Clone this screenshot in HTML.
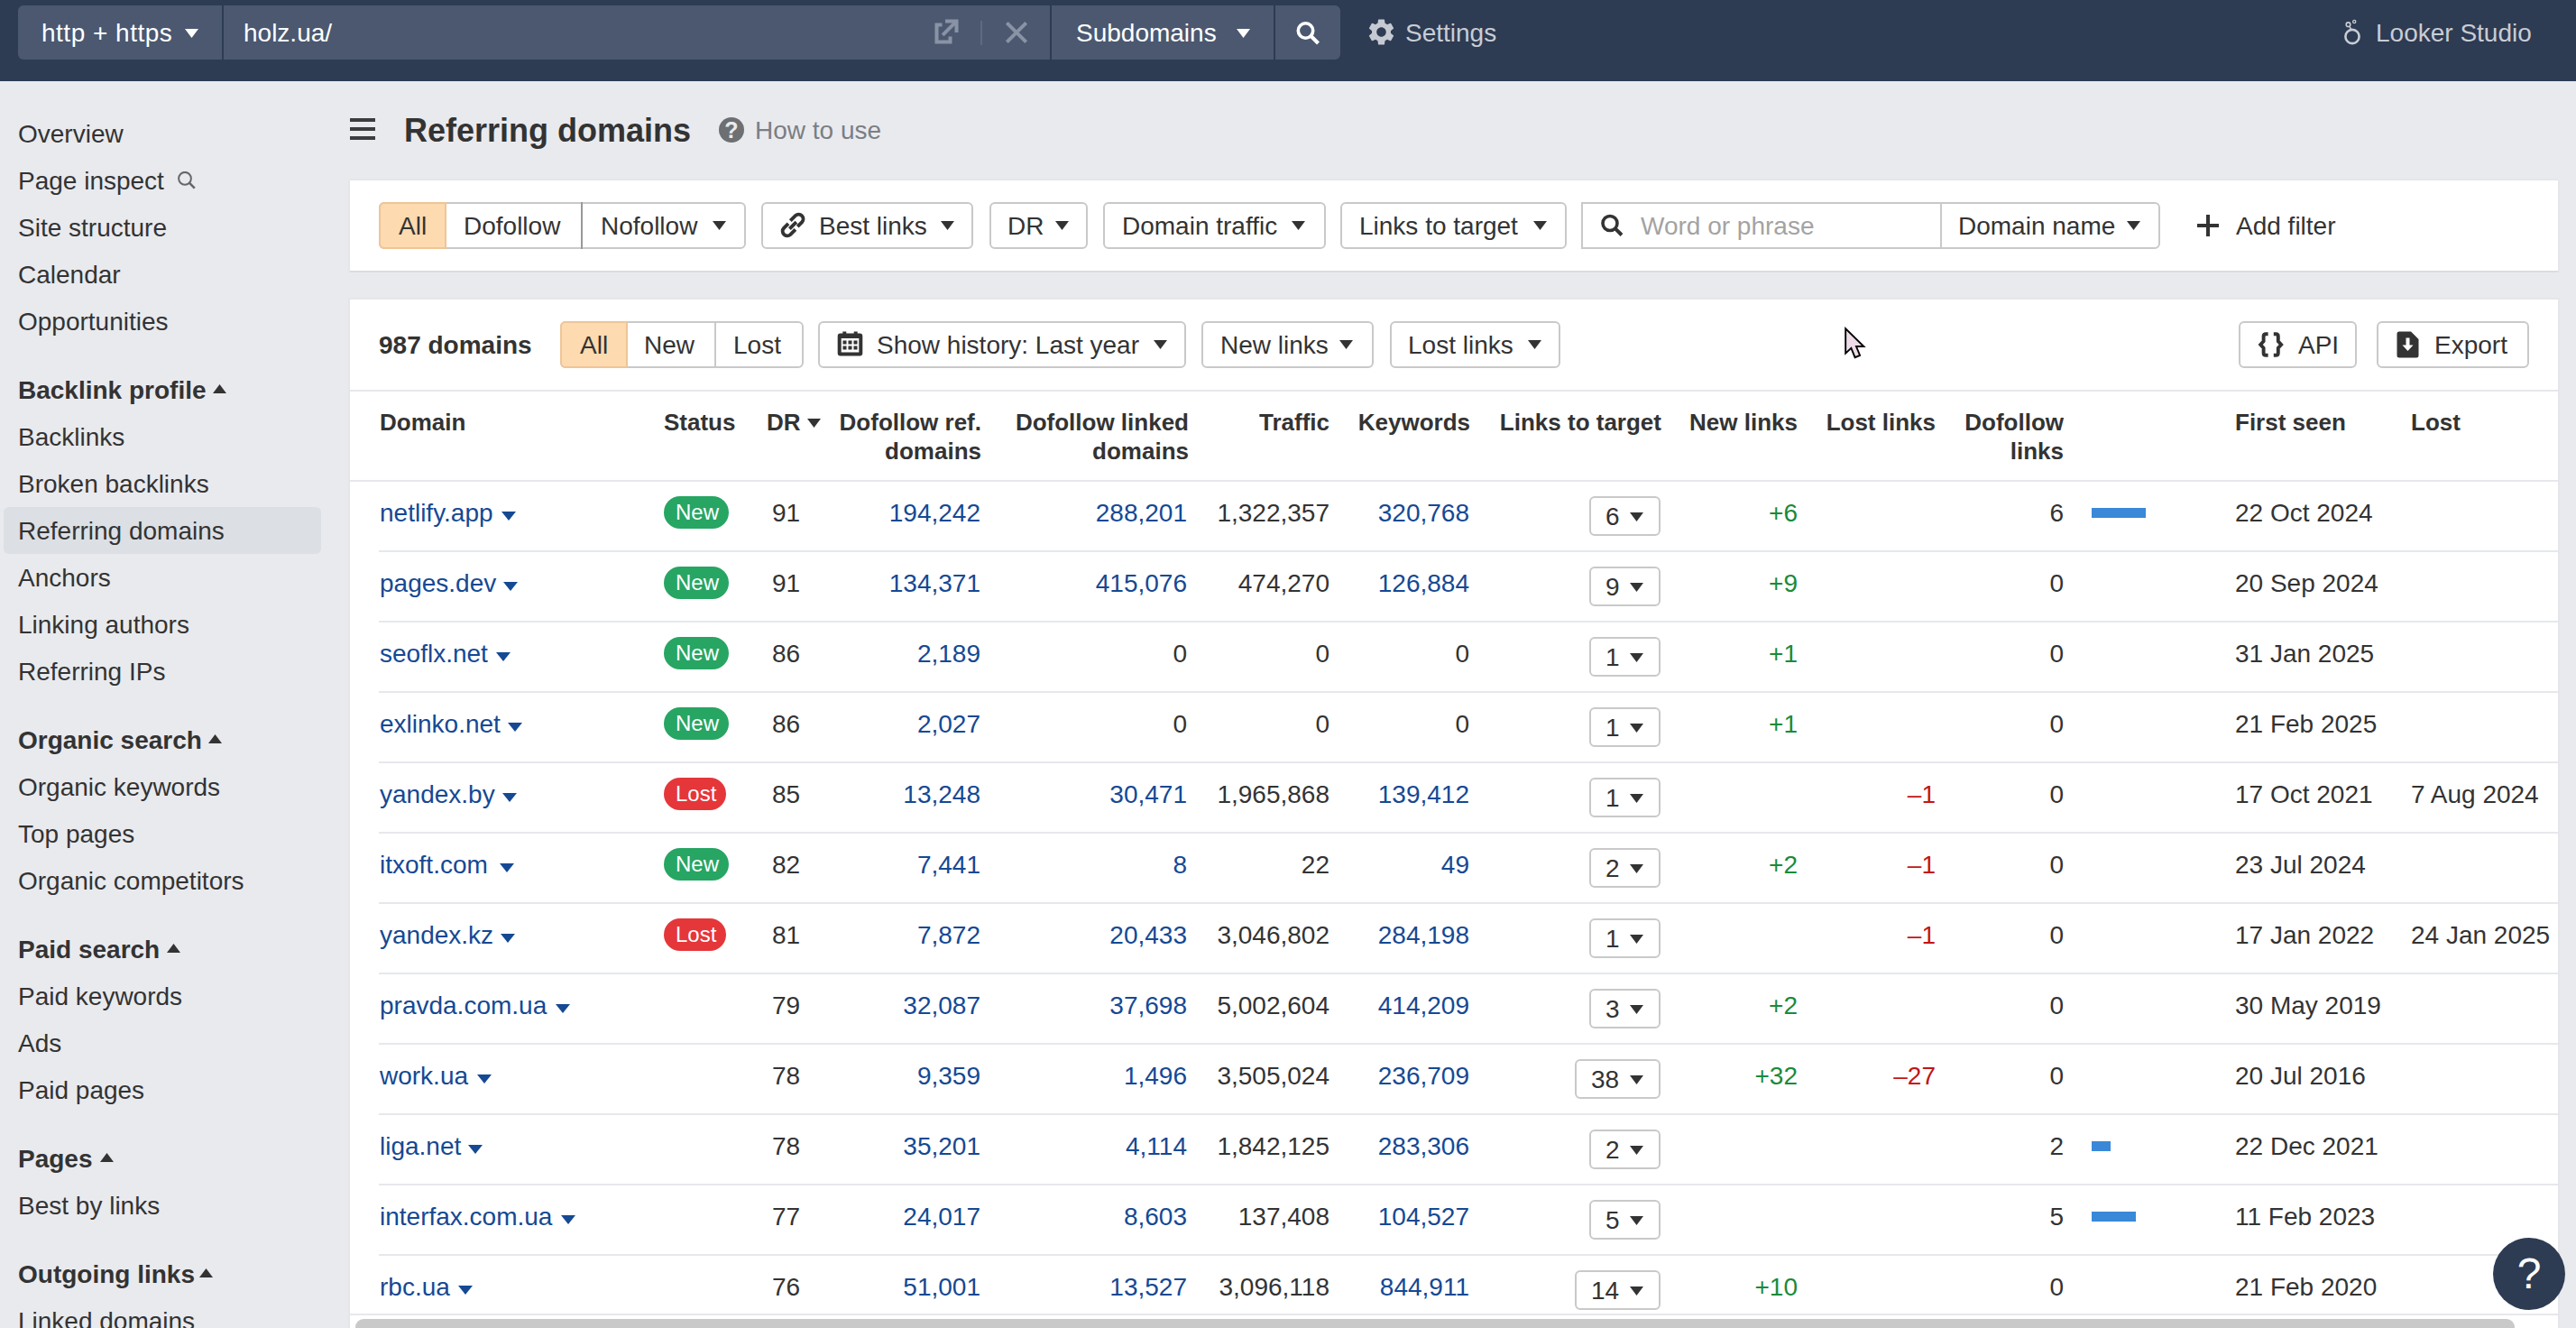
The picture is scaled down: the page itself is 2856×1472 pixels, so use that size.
<!DOCTYPE html>
<html><head><meta charset="utf-8">
<style>
html,body{margin:0;padding:0;}
body{width:2856px;height:1472px;overflow:hidden;position:relative;background:#e9eaee;font-family:"Liberation Sans",sans-serif;color:#333;}
.t{position:absolute;white-space:nowrap;}
.abs{position:absolute;}
.btn{position:absolute;box-sizing:border-box;border:2px solid #c9c9c9;border-radius:6px;background:#fff;height:52px;}
</style></head><body>

<div class="abs" style="left:0;top:0;width:2856px;height:90px;background:#2d3b53"></div>
<div class="abs" style="left:20px;top:6px;width:1466px;height:60px;background:#4b5870;border-radius:6px"></div>
<div class="abs" style="left:246px;top:6px;width:2px;height:60px;background:#2d3b53"></div>
<div class="abs" style="left:1164px;top:6px;width:2px;height:60px;background:#2d3b53"></div>
<div class="abs" style="left:1412px;top:6px;width:2px;height:60px;background:#2d3b53"></div>
<div class="t" style="left:46px;top:23px;font-size:28px;line-height:28px;color:#ffffff;letter-spacing:0.5px;">http + https</div>
<svg style="position:absolute;left:205px;top:32px" width="15" height="10" viewBox="0 0 15 10"><polygon points="0,0 15,0 7.5,10" fill="#ffffff"/></svg>
<div class="t" style="left:270px;top:23px;font-size:28px;line-height:28px;color:#ffffff;">holz.ua/</div>
<svg class="abs" style="left:1036px;top:21px" width="28" height="28" viewBox="0 0 28 28">
<path d="M0.5 4.5 H8.5 V8.5 H4.5 V23.5 H15.5 V19.5 H19.5 V27.5 H0.5 Z" fill="#8993a5"/>
<path d="M12 0.5 H26.5 V15 H22.5 V7.3 L10.5 19.3 L7.7 16.5 L19.7 4.5 H12 Z" fill="#8993a5"/>
</svg>
<div class="abs" style="left:1087px;top:23px;width:2px;height:27px;background:#5f6a7e"></div>
<svg class="abs" style="left:1114px;top:23px" width="26" height="26" viewBox="0 0 26 26">
<path d="M2.3 2.3 L23.7 23.7 M23.7 2.3 L2.3 23.7" stroke="#8993a5" stroke-width="4" stroke-linecap="butt"/></svg>
<div class="t" style="left:1193px;top:23px;font-size:28px;line-height:28px;color:#ffffff;">Subdomains</div>
<svg style="position:absolute;left:1371px;top:32px" width="15" height="10" viewBox="0 0 15 10"><polygon points="0,0 15,0 7.5,10" fill="#ffffff"/></svg>
<svg class="abs" style="left:1436px;top:22px" width="30" height="30" viewBox="0 0 30 30">
<circle cx="11.5" cy="12" r="8.2" fill="none" stroke="#fff" stroke-width="3.6"/>
<path d="M17.5 18 L25.5 26" stroke="#fff" stroke-width="4"/></svg>
<svg class="abs" style="left:1514px;top:18px" width="35" height="35" viewBox="0 0 24 24">
<path fill="#c5cad2" d="M19.14 12.94c.04-.3.06-.61.06-.94 0-.32-.02-.64-.07-.94l2.03-1.58c.18-.14.23-.41.12-.61l-1.92-3.32c-.12-.22-.37-.29-.59-.22l-2.39.96c-.5-.38-1.03-.7-1.62-.94l-.36-2.54c-.04-.24-.24-.41-.48-.41h-3.84c-.24 0-.43.17-.47.41l-.36 2.54c-.59.24-1.13.57-1.62.94l-2.39-.96c-.22-.08-.47 0-.59.22L2.74 8.87c-.12.21-.08.47.12.61l2.03 1.58c-.05.3-.09.63-.09.94s.02.64.07.94l-2.03 1.58c-.18.14-.23.41-.12.61l1.92 3.32c.12.22.37.29.59.22l2.39-.96c.5.38 1.03.7 1.62.94l.36 2.54c.05.24.24.41.48.41h3.84c.24 0 .44-.17.47-.41l.36-2.54c.59-.24 1.13-.56 1.62-.94l2.39.96c.22.08.47 0 .59-.22l1.92-3.32c.12-.22.07-.47-.12-.61l-2.01-1.58zM12 15.6c-1.98 0-3.6-1.62-3.6-3.6s1.62-3.6 3.6-3.6 3.6 1.62 3.6 3.6-1.62 3.6-3.6 3.6z"/></svg>
<div class="t" style="left:1558px;top:23px;font-size:28px;line-height:28px;color:#c8cdd5;">Settings</div>
<svg class="abs" style="left:2596px;top:20px" width="24" height="32" viewBox="0 0 24 32">
<circle cx="12" cy="20.5" r="7.6" fill="none" stroke="#c8cdd5" stroke-width="2.6"/>
<circle cx="7.5" cy="7.2" r="2.3" fill="none" stroke="#c8cdd5" stroke-width="1.6"/>
<circle cx="14.2" cy="4" r="1.6" fill="none" stroke="#c8cdd5" stroke-width="1.3"/>
<path d="M8.8 9.2 L10.5 12.2" stroke="#c8cdd5" stroke-width="1.6"/>
</svg>
<div class="t" style="left:2634px;top:23px;font-size:28px;line-height:28px;color:#c8cdd5;">Looker Studio</div>
<div class="abs" style="left:4px;top:562px;width:352px;height:52px;background:#dcdfe4;border-radius:6px"></div>
<div class="t" style="left:20px;top:135px;font-size:28px;line-height:28px;color:#333333;">Overview</div>
<div class="t" style="left:20px;top:187px;font-size:28px;line-height:28px;color:#333333;">Page inspect</div>
<div class="t" style="left:20px;top:239px;font-size:28px;line-height:28px;color:#333333;">Site structure</div>
<div class="t" style="left:20px;top:291px;font-size:28px;line-height:28px;color:#333333;">Calendar</div>
<div class="t" style="left:20px;top:343px;font-size:28px;line-height:28px;color:#333333;">Opportunities</div>
<div class="t" style="left:20px;top:419px;font-size:28px;line-height:28px;color:#333333;font-weight:bold;">Backlink profile</div>
<svg style="position:absolute;left:236px;top:426px" width="15" height="10" viewBox="0 0 15 10"><polygon points="0,10 15,10 7.5,0" fill="#333333"/></svg>
<div class="t" style="left:20px;top:471px;font-size:28px;line-height:28px;color:#333333;">Backlinks</div>
<div class="t" style="left:20px;top:523px;font-size:28px;line-height:28px;color:#333333;">Broken backlinks</div>
<div class="t" style="left:20px;top:575px;font-size:28px;line-height:28px;color:#333333;">Referring domains</div>
<div class="t" style="left:20px;top:627px;font-size:28px;line-height:28px;color:#333333;">Anchors</div>
<div class="t" style="left:20px;top:679px;font-size:28px;line-height:28px;color:#333333;">Linking authors</div>
<div class="t" style="left:20px;top:731px;font-size:28px;line-height:28px;color:#333333;">Referring IPs</div>
<div class="t" style="left:20px;top:807px;font-size:28px;line-height:28px;color:#333333;font-weight:bold;">Organic search</div>
<svg style="position:absolute;left:231px;top:814px" width="15" height="10" viewBox="0 0 15 10"><polygon points="0,10 15,10 7.5,0" fill="#333333"/></svg>
<div class="t" style="left:20px;top:859px;font-size:28px;line-height:28px;color:#333333;">Organic keywords</div>
<div class="t" style="left:20px;top:911px;font-size:28px;line-height:28px;color:#333333;">Top pages</div>
<div class="t" style="left:20px;top:963px;font-size:28px;line-height:28px;color:#333333;">Organic competitors</div>
<div class="t" style="left:20px;top:1039px;font-size:28px;line-height:28px;color:#333333;font-weight:bold;">Paid search</div>
<svg style="position:absolute;left:185px;top:1046px" width="15" height="10" viewBox="0 0 15 10"><polygon points="0,10 15,10 7.5,0" fill="#333333"/></svg>
<div class="t" style="left:20px;top:1091px;font-size:28px;line-height:28px;color:#333333;">Paid keywords</div>
<div class="t" style="left:20px;top:1143px;font-size:28px;line-height:28px;color:#333333;">Ads</div>
<div class="t" style="left:20px;top:1195px;font-size:28px;line-height:28px;color:#333333;">Paid pages</div>
<div class="t" style="left:20px;top:1271px;font-size:28px;line-height:28px;color:#333333;font-weight:bold;">Pages</div>
<svg style="position:absolute;left:111px;top:1278px" width="15" height="10" viewBox="0 0 15 10"><polygon points="0,10 15,10 7.5,0" fill="#333333"/></svg>
<div class="t" style="left:20px;top:1323px;font-size:28px;line-height:28px;color:#333333;">Best by links</div>
<div class="t" style="left:20px;top:1399px;font-size:28px;line-height:28px;color:#333333;font-weight:bold;">Outgoing links</div>
<svg style="position:absolute;left:221px;top:1406px" width="15" height="10" viewBox="0 0 15 10"><polygon points="0,10 15,10 7.5,0" fill="#333333"/></svg>
<div class="t" style="left:20px;top:1451px;font-size:28px;line-height:28px;color:#333333;">Linked domains</div>
<svg class="abs" style="left:196px;top:190px" width="24" height="24" viewBox="0 0 24 24">
<circle cx="9" cy="7.8" r="6.9" fill="none" stroke="#63676c" stroke-width="2"/>
<path d="M13.9 12.7 L19.8 18.6" stroke="#63676c" stroke-width="2.6"/></svg>
<div class="abs" style="left:388px;top:131px;width:28px;height:4px;background:#3a3c3e"></div>
<div class="abs" style="left:388px;top:141px;width:28px;height:4px;background:#3a3c3e"></div>
<div class="abs" style="left:388px;top:151px;width:28px;height:4px;background:#3a3c3e"></div>
<div class="t" style="left:448px;top:127px;font-size:36px;line-height:36px;color:#333333;font-weight:bold;">Referring domains</div>
<div class="abs" style="left:797px;top:130px;width:28px;height:28px;border-radius:50%;background:#6c7073"></div>
<div class="t" style="left:797px;top:130px;width:28px;height:28px;line-height:28px;text-align:center;font-size:25px;font-weight:bold;color:#e9eaee">?</div>
<div class="t" style="left:837px;top:131px;font-size:28px;line-height:28px;color:#7b7e83;">How to use</div>
<div class="abs" style="left:388px;top:200px;width:2448px;height:100px;background:#fff;border-bottom:2px solid #d9dce0;box-shadow:0 -2px 0 0 #e4e6ea, 2px 0 0 0 #e4e6ea, -2px 0 0 0 #e4e6ea"></div>
<div class="btn" style="left:420px;top:224px;width:407px"></div>
<div class="abs" style="left:420px;top:224px;width:75px;height:52px;box-sizing:border-box;background:#fddab0;border:2px solid #eec597;border-radius:6px 0 0 6px"></div>
<div class="abs" style="left:644px;top:224px;width:2px;height:52px;background:#999"></div>
<div class="t" style="left:442px;top:237px;font-size:28px;line-height:28px;color:#333333;">All</div>
<div class="t" style="left:514px;top:237px;font-size:28px;line-height:28px;color:#333333;">Dofollow</div>
<div class="t" style="left:666px;top:237px;font-size:28px;line-height:28px;color:#333333;">Nofollow</div>
<svg style="position:absolute;left:790px;top:245px" width="15" height="10" viewBox="0 0 15 10"><polygon points="0,0 15,0 7.5,10" fill="#333333"/></svg>
<div class="btn" style="left:844px;top:224px;width:235px"></div>
<svg class="abs" style="left:855px;top:225px" width="50" height="50" viewBox="0 0 50 50">
<g fill="none" stroke="#333" stroke-width="3.9" stroke-linecap="butt">
<path d="M21.3 19.6 L27 13.9 A5.1 5.1 0 0 1 34.2 21.1 L29.2 26.1"/>
<path d="M26.9 29.4 L21.2 35.1 A5.1 5.1 0 0 1 14 27.9 L19 22.9"/>
<path d="M20.4 28.6 L27.9 21.1"/>
</g></svg>
<div class="t" style="left:908px;top:237px;font-size:28px;line-height:28px;color:#333333;">Best links</div>
<svg style="position:absolute;left:1043px;top:245px" width="15" height="10" viewBox="0 0 15 10"><polygon points="0,0 15,0 7.5,10" fill="#333333"/></svg>
<div class="btn" style="left:1097px;top:224px;width:109px"></div>
<div class="t" style="left:1117px;top:237px;font-size:28px;line-height:28px;color:#333333;">DR</div>
<svg style="position:absolute;left:1170px;top:245px" width="15" height="10" viewBox="0 0 15 10"><polygon points="0,0 15,0 7.5,10" fill="#333333"/></svg>
<div class="btn" style="left:1223px;top:224px;width:247px"></div>
<div class="t" style="left:1244px;top:237px;font-size:28px;line-height:28px;color:#333333;">Domain traffic</div>
<svg style="position:absolute;left:1432px;top:245px" width="15" height="10" viewBox="0 0 15 10"><polygon points="0,0 15,0 7.5,10" fill="#333333"/></svg>
<div class="btn" style="left:1486px;top:224px;width:251px"></div>
<div class="t" style="left:1507px;top:237px;font-size:28px;line-height:28px;color:#333333;">Links to target</div>
<svg style="position:absolute;left:1700px;top:245px" width="15" height="10" viewBox="0 0 15 10"><polygon points="0,0 15,0 7.5,10" fill="#333333"/></svg>
<div class="btn" style="left:1753px;top:224px;width:642px;border-radius:0 6px 6px 0"></div>
<div class="abs" style="left:2151px;top:224px;width:2px;height:52px;background:#c9c9c9"></div>
<svg class="abs" style="left:1772px;top:234px" width="30" height="30" viewBox="0 0 30 30">
<circle cx="13" cy="13.5" r="8" fill="none" stroke="#333" stroke-width="3.6"/>
<path d="M18.8 19.3 L26 26.5" stroke="#333" stroke-width="4"/></svg>
<div class="t" style="left:1819px;top:237px;font-size:28px;line-height:28px;color:#a3a3a3;">Word or phrase</div>
<div class="t" style="left:2171px;top:237px;font-size:28px;line-height:28px;color:#333333;">Domain name</div>
<svg style="position:absolute;left:2358px;top:245px" width="15" height="10" viewBox="0 0 15 10"><polygon points="0,0 15,0 7.5,10" fill="#333333"/></svg>
<div class="abs" style="left:2436px;top:248px;width:24px;height:4px;background:#333"></div>
<div class="abs" style="left:2446px;top:238px;width:4px;height:24px;background:#333"></div>
<div class="t" style="left:2479px;top:237px;font-size:28px;line-height:28px;color:#333333;">Add filter</div>
<div class="abs" style="left:388px;top:332px;width:2448px;height:1140px;background:#fff;box-shadow:0 0 0 2px #e4e6ea"></div>
<div class="t" style="left:420px;top:369px;font-size:28px;line-height:28px;color:#333333;font-weight:bold;">987 domains</div>
<div class="btn" style="left:621px;top:356px;width:270px"></div>
<div class="abs" style="left:621px;top:356px;width:75px;height:52px;box-sizing:border-box;background:#fddab0;border:2px solid #eec597;border-radius:6px 0 0 6px"></div>
<div class="abs" style="left:792px;top:356px;width:2px;height:52px;background:#c9c9c9"></div>
<div class="t" style="left:643px;top:369px;font-size:28px;line-height:28px;color:#333333;">All</div>
<div class="t" style="left:714px;top:369px;font-size:28px;line-height:28px;color:#333333;">New</div>
<div class="t" style="left:813px;top:369px;font-size:28px;line-height:28px;color:#333333;">Lost</div>
<div class="btn" style="left:907px;top:356px;width:408px"></div>
<svg class="abs" style="left:928px;top:367px" width="30" height="28" viewBox="0 0 30 28">
<path fill="#333" d="M6.3 0.5 H10.3 V2.5 H18.7 V0.5 H22.7 V2.5 H25.3 A3 3 0 0 1 28.3 5.5 V24.5 A3 3 0 0 1 25.3 27.5 H3.7 A3 3 0 0 1 0.7 24.5 V5.5 A3 3 0 0 1 3.7 2.5 H6.3 Z M4.7 8 V23.5 H24.3 V8 Z"/>
<rect x="6.5" y="10.5" width="4" height="4" fill="#333"/><rect x="12.5" y="10.5" width="4" height="4" fill="#333"/><rect x="18.5" y="10.5" width="4" height="4" fill="#333"/>
<rect x="6.5" y="16.5" width="4" height="4" fill="#333"/><rect x="12.5" y="16.5" width="4" height="4" fill="#333"/><rect x="18.5" y="16.5" width="4" height="4" fill="#333"/>
</svg>
<div class="t" style="left:972px;top:369px;font-size:28px;line-height:28px;color:#333333;">Show history: Last year</div>
<svg style="position:absolute;left:1279px;top:377px" width="15" height="10" viewBox="0 0 15 10"><polygon points="0,0 15,0 7.5,10" fill="#333333"/></svg>
<div class="btn" style="left:1332px;top:356px;width:191px"></div>
<div class="t" style="left:1353px;top:369px;font-size:28px;line-height:28px;color:#333333;">New links</div>
<svg style="position:absolute;left:1485px;top:377px" width="15" height="10" viewBox="0 0 15 10"><polygon points="0,0 15,0 7.5,10" fill="#333333"/></svg>
<div class="btn" style="left:1541px;top:356px;width:189px"></div>
<div class="t" style="left:1561px;top:369px;font-size:28px;line-height:28px;color:#333333;">Lost links</div>
<svg style="position:absolute;left:1694px;top:377px" width="15" height="10" viewBox="0 0 15 10"><polygon points="0,0 15,0 7.5,10" fill="#333333"/></svg>
<div class="btn" style="left:2482px;top:356px;width:131px"></div>
<svg class="abs" style="left:2503px;top:367px" width="30" height="30" viewBox="0 0 30 30">
<path fill="none" stroke="#333" stroke-width="3.9" d="M11.6 3.2 H9.2 Q6.6 3.2 6.6 5.8 V11.2 L3.2 15 L6.6 18.8 V24.2 Q6.6 26.8 9.2 26.8 H11.6 M17.8 3.2 H20.2 Q22.8 3.2 22.8 5.8 V11.2 L26.2 15 L22.8 18.8 V24.2 Q22.8 26.8 20.2 26.8 H17.8"/></svg>
<div class="t" style="left:2548px;top:369px;font-size:28px;line-height:28px;color:#333333;">API</div>
<div class="btn" style="left:2635px;top:356px;width:169px"></div>
<svg class="abs" style="left:2657px;top:367px" width="26" height="30" viewBox="0 0 26 30">
<path fill="#333" d="M3 0.5 H16 L24.5 9 V27 A2.5 2.5 0 0 1 22 29.5 H3 A2.5 2.5 0 0 1 0.5 27 V3 A2.5 2.5 0 0 1 3 0.5 Z"/>
<path fill="#fff" d="M10.5 7.5 H14.5 V15.5 H18.5 L12.5 22 L6.5 15.5 H10.5 Z"/></svg>
<div class="t" style="left:2699px;top:369px;font-size:28px;line-height:28px;color:#333333;">Export</div>
<div class="abs" style="left:388px;top:432px;width:2448px;height:2px;background:#e6e8ec"></div>
<div class="t" style="left:421px;top:455px;font-size:26px;line-height:26px;color:#333333;font-weight:bold;">Domain</div>
<div class="t" style="left:736px;top:455px;font-size:26px;line-height:26px;color:#333333;font-weight:bold;">Status</div>
<div class="t" style="left:850px;top:455px;font-size:26px;line-height:26px;color:#333333;font-weight:bold;">DR</div>
<svg style="position:absolute;left:895px;top:464px" width="15" height="10" viewBox="0 0 15 10"><polygon points="0,0 15,0 7.5,10" fill="#333333"/></svg>
<div class="t" style="right:1768px;top:455px;font-size:26px;line-height:26px;color:#333333;font-weight:bold;">Dofollow ref.</div>
<div class="t" style="right:1768px;top:487px;font-size:26px;line-height:26px;color:#333333;font-weight:bold;">domains</div>
<div class="t" style="right:1538px;top:455px;font-size:26px;line-height:26px;color:#333333;font-weight:bold;">Dofollow linked</div>
<div class="t" style="right:1538px;top:487px;font-size:26px;line-height:26px;color:#333333;font-weight:bold;">domains</div>
<div class="t" style="right:1382px;top:455px;font-size:26px;line-height:26px;color:#333333;font-weight:bold;">Traffic</div>
<div class="t" style="right:1226px;top:455px;font-size:26px;line-height:26px;color:#333333;font-weight:bold;">Keywords</div>
<div class="t" style="right:1014px;top:455px;font-size:26px;line-height:26px;color:#333333;font-weight:bold;">Links to target</div>
<div class="t" style="right:863px;top:455px;font-size:26px;line-height:26px;color:#333333;font-weight:bold;">New links</div>
<div class="t" style="right:710px;top:455px;font-size:26px;line-height:26px;color:#333333;font-weight:bold;">Lost links</div>
<div class="t" style="right:568px;top:455px;font-size:26px;line-height:26px;color:#333333;font-weight:bold;">Dofollow</div>
<div class="t" style="right:568px;top:487px;font-size:26px;line-height:26px;color:#333333;font-weight:bold;">links</div>
<div class="t" style="left:2478px;top:455px;font-size:26px;line-height:26px;color:#333333;font-weight:bold;">First seen</div>
<div class="t" style="left:2673px;top:455px;font-size:26px;line-height:26px;color:#333333;font-weight:bold;">Lost</div>
<div class="abs" style="left:388px;top:532px;width:2448px;height:2px;background:#e6e8ec"></div>
<div class="abs" style="left:388px;top:534px;width:2448px;height:922px;overflow:hidden">
<div class="t" style="left:33px;top:21px;font-size:28px;line-height:28px;color:#154994;">netlify.app</div>
<svg style="position:absolute;left:168px;top:33px" width="16" height="10" viewBox="0 0 16 10"><polygon points="0,0 16,0 8.0,10" fill="#154994"/></svg>
<div class="abs" style="left:348px;top:16px;width:72px;height:36px;border-radius:18px;background:#27a563"></div>
<div class="t" style="left:361px;top:22px;font-size:24px;line-height:24px;color:#fff;">New</div>
<div class="t" style="left:468px;top:21px;font-size:28px;line-height:28px;color:#333333;">91</div>
<div class="t" style="right:1749px;top:21px;font-size:28px;line-height:28px;color:#154994;">194,242</div>
<div class="t" style="right:1520px;top:21px;font-size:28px;line-height:28px;color:#154994;">288,201</div>
<div class="t" style="right:1362px;top:21px;font-size:28px;line-height:28px;color:#333333;">1,322,357</div>
<div class="t" style="right:1207px;top:21px;font-size:28px;line-height:28px;color:#154994;">320,768</div>
<div class="abs" style="left:1374px;top:16px;width:79px;height:44px;box-sizing:border-box;border:2px solid #c9c9c9;border-radius:6px;background:#fff"></div>
<div class="t" style="left:1392px;top:25px;font-size:28px;line-height:28px;color:#333333;">6</div>
<svg style="position:absolute;left:1419px;top:34px" width="15" height="10" viewBox="0 0 15 10"><polygon points="0,0 15,0 7.5,10" fill="#333333"/></svg>
<div class="t" style="right:843px;top:21px;font-size:28px;line-height:28px;color:#1b8a3a;">+6</div>
<div class="t" style="right:548px;top:21px;font-size:28px;line-height:28px;color:#333333;">6</div>
<div class="abs" style="left:1931px;top:29px;width:60px;height:11px;background:#3a88d8"></div>
<div class="t" style="left:2090px;top:21px;font-size:28px;line-height:28px;color:#333333;">22 Oct 2024</div>
<div class="abs" style="left:32px;top:76px;width:2416px;height:2px;background:#e6e8ec"></div>
<div class="t" style="left:33px;top:99px;font-size:28px;line-height:28px;color:#154994;">pages.dev</div>
<svg style="position:absolute;left:170px;top:111px" width="16" height="10" viewBox="0 0 16 10"><polygon points="0,0 16,0 8.0,10" fill="#154994"/></svg>
<div class="abs" style="left:348px;top:94px;width:72px;height:36px;border-radius:18px;background:#27a563"></div>
<div class="t" style="left:361px;top:100px;font-size:24px;line-height:24px;color:#fff;">New</div>
<div class="t" style="left:468px;top:99px;font-size:28px;line-height:28px;color:#333333;">91</div>
<div class="t" style="right:1749px;top:99px;font-size:28px;line-height:28px;color:#154994;">134,371</div>
<div class="t" style="right:1520px;top:99px;font-size:28px;line-height:28px;color:#154994;">415,076</div>
<div class="t" style="right:1362px;top:99px;font-size:28px;line-height:28px;color:#333333;">474,270</div>
<div class="t" style="right:1207px;top:99px;font-size:28px;line-height:28px;color:#154994;">126,884</div>
<div class="abs" style="left:1374px;top:94px;width:79px;height:44px;box-sizing:border-box;border:2px solid #c9c9c9;border-radius:6px;background:#fff"></div>
<div class="t" style="left:1392px;top:103px;font-size:28px;line-height:28px;color:#333333;">9</div>
<svg style="position:absolute;left:1419px;top:112px" width="15" height="10" viewBox="0 0 15 10"><polygon points="0,0 15,0 7.5,10" fill="#333333"/></svg>
<div class="t" style="right:843px;top:99px;font-size:28px;line-height:28px;color:#1b8a3a;">+9</div>
<div class="t" style="right:548px;top:99px;font-size:28px;line-height:28px;color:#333333;">0</div>
<div class="t" style="left:2090px;top:99px;font-size:28px;line-height:28px;color:#333333;">20 Sep 2024</div>
<div class="abs" style="left:32px;top:154px;width:2416px;height:2px;background:#e6e8ec"></div>
<div class="t" style="left:33px;top:177px;font-size:28px;line-height:28px;color:#154994;">seoflx.net</div>
<svg style="position:absolute;left:162px;top:189px" width="16" height="10" viewBox="0 0 16 10"><polygon points="0,0 16,0 8.0,10" fill="#154994"/></svg>
<div class="abs" style="left:348px;top:172px;width:72px;height:36px;border-radius:18px;background:#27a563"></div>
<div class="t" style="left:361px;top:178px;font-size:24px;line-height:24px;color:#fff;">New</div>
<div class="t" style="left:468px;top:177px;font-size:28px;line-height:28px;color:#333333;">86</div>
<div class="t" style="right:1749px;top:177px;font-size:28px;line-height:28px;color:#154994;">2,189</div>
<div class="t" style="right:1520px;top:177px;font-size:28px;line-height:28px;color:#333333;">0</div>
<div class="t" style="right:1362px;top:177px;font-size:28px;line-height:28px;color:#333333;">0</div>
<div class="t" style="right:1207px;top:177px;font-size:28px;line-height:28px;color:#333333;">0</div>
<div class="abs" style="left:1374px;top:172px;width:79px;height:44px;box-sizing:border-box;border:2px solid #c9c9c9;border-radius:6px;background:#fff"></div>
<div class="t" style="left:1392px;top:181px;font-size:28px;line-height:28px;color:#333333;">1</div>
<svg style="position:absolute;left:1419px;top:190px" width="15" height="10" viewBox="0 0 15 10"><polygon points="0,0 15,0 7.5,10" fill="#333333"/></svg>
<div class="t" style="right:843px;top:177px;font-size:28px;line-height:28px;color:#1b8a3a;">+1</div>
<div class="t" style="right:548px;top:177px;font-size:28px;line-height:28px;color:#333333;">0</div>
<div class="t" style="left:2090px;top:177px;font-size:28px;line-height:28px;color:#333333;">31 Jan 2025</div>
<div class="abs" style="left:32px;top:232px;width:2416px;height:2px;background:#e6e8ec"></div>
<div class="t" style="left:33px;top:255px;font-size:28px;line-height:28px;color:#154994;">exlinko.net</div>
<svg style="position:absolute;left:175px;top:267px" width="16" height="10" viewBox="0 0 16 10"><polygon points="0,0 16,0 8.0,10" fill="#154994"/></svg>
<div class="abs" style="left:348px;top:250px;width:72px;height:36px;border-radius:18px;background:#27a563"></div>
<div class="t" style="left:361px;top:256px;font-size:24px;line-height:24px;color:#fff;">New</div>
<div class="t" style="left:468px;top:255px;font-size:28px;line-height:28px;color:#333333;">86</div>
<div class="t" style="right:1749px;top:255px;font-size:28px;line-height:28px;color:#154994;">2,027</div>
<div class="t" style="right:1520px;top:255px;font-size:28px;line-height:28px;color:#333333;">0</div>
<div class="t" style="right:1362px;top:255px;font-size:28px;line-height:28px;color:#333333;">0</div>
<div class="t" style="right:1207px;top:255px;font-size:28px;line-height:28px;color:#333333;">0</div>
<div class="abs" style="left:1374px;top:250px;width:79px;height:44px;box-sizing:border-box;border:2px solid #c9c9c9;border-radius:6px;background:#fff"></div>
<div class="t" style="left:1392px;top:259px;font-size:28px;line-height:28px;color:#333333;">1</div>
<svg style="position:absolute;left:1419px;top:268px" width="15" height="10" viewBox="0 0 15 10"><polygon points="0,0 15,0 7.5,10" fill="#333333"/></svg>
<div class="t" style="right:843px;top:255px;font-size:28px;line-height:28px;color:#1b8a3a;">+1</div>
<div class="t" style="right:548px;top:255px;font-size:28px;line-height:28px;color:#333333;">0</div>
<div class="t" style="left:2090px;top:255px;font-size:28px;line-height:28px;color:#333333;">21 Feb 2025</div>
<div class="abs" style="left:32px;top:310px;width:2416px;height:2px;background:#e6e8ec"></div>
<div class="t" style="left:33px;top:333px;font-size:28px;line-height:28px;color:#154994;">yandex.by</div>
<svg style="position:absolute;left:169px;top:345px" width="16" height="10" viewBox="0 0 16 10"><polygon points="0,0 16,0 8.0,10" fill="#154994"/></svg>
<div class="abs" style="left:348px;top:328px;width:69px;height:36px;border-radius:18px;background:#e5363a"></div>
<div class="t" style="left:361px;top:334px;font-size:24px;line-height:24px;color:#fff;">Lost</div>
<div class="t" style="left:468px;top:333px;font-size:28px;line-height:28px;color:#333333;">85</div>
<div class="t" style="right:1749px;top:333px;font-size:28px;line-height:28px;color:#154994;">13,248</div>
<div class="t" style="right:1520px;top:333px;font-size:28px;line-height:28px;color:#154994;">30,471</div>
<div class="t" style="right:1362px;top:333px;font-size:28px;line-height:28px;color:#333333;">1,965,868</div>
<div class="t" style="right:1207px;top:333px;font-size:28px;line-height:28px;color:#154994;">139,412</div>
<div class="abs" style="left:1374px;top:328px;width:79px;height:44px;box-sizing:border-box;border:2px solid #c9c9c9;border-radius:6px;background:#fff"></div>
<div class="t" style="left:1392px;top:337px;font-size:28px;line-height:28px;color:#333333;">1</div>
<svg style="position:absolute;left:1419px;top:346px" width="15" height="10" viewBox="0 0 15 10"><polygon points="0,0 15,0 7.5,10" fill="#333333"/></svg>
<div class="t" style="right:690px;top:333px;font-size:28px;line-height:28px;color:#c31515;">–1</div>
<div class="t" style="right:548px;top:333px;font-size:28px;line-height:28px;color:#333333;">0</div>
<div class="t" style="left:2090px;top:333px;font-size:28px;line-height:28px;color:#333333;">17 Oct 2021</div>
<div class="t" style="left:2285px;top:333px;font-size:28px;line-height:28px;color:#333333;">7 Aug 2024</div>
<div class="abs" style="left:32px;top:388px;width:2416px;height:2px;background:#e6e8ec"></div>
<div class="t" style="left:33px;top:411px;font-size:28px;line-height:28px;color:#154994;">itxoft.com</div>
<svg style="position:absolute;left:166px;top:423px" width="16" height="10" viewBox="0 0 16 10"><polygon points="0,0 16,0 8.0,10" fill="#154994"/></svg>
<div class="abs" style="left:348px;top:406px;width:72px;height:36px;border-radius:18px;background:#27a563"></div>
<div class="t" style="left:361px;top:412px;font-size:24px;line-height:24px;color:#fff;">New</div>
<div class="t" style="left:468px;top:411px;font-size:28px;line-height:28px;color:#333333;">82</div>
<div class="t" style="right:1749px;top:411px;font-size:28px;line-height:28px;color:#154994;">7,441</div>
<div class="t" style="right:1520px;top:411px;font-size:28px;line-height:28px;color:#154994;">8</div>
<div class="t" style="right:1362px;top:411px;font-size:28px;line-height:28px;color:#333333;">22</div>
<div class="t" style="right:1207px;top:411px;font-size:28px;line-height:28px;color:#154994;">49</div>
<div class="abs" style="left:1374px;top:406px;width:79px;height:44px;box-sizing:border-box;border:2px solid #c9c9c9;border-radius:6px;background:#fff"></div>
<div class="t" style="left:1392px;top:415px;font-size:28px;line-height:28px;color:#333333;">2</div>
<svg style="position:absolute;left:1419px;top:424px" width="15" height="10" viewBox="0 0 15 10"><polygon points="0,0 15,0 7.5,10" fill="#333333"/></svg>
<div class="t" style="right:843px;top:411px;font-size:28px;line-height:28px;color:#1b8a3a;">+2</div>
<div class="t" style="right:690px;top:411px;font-size:28px;line-height:28px;color:#c31515;">–1</div>
<div class="t" style="right:548px;top:411px;font-size:28px;line-height:28px;color:#333333;">0</div>
<div class="t" style="left:2090px;top:411px;font-size:28px;line-height:28px;color:#333333;">23 Jul 2024</div>
<div class="abs" style="left:32px;top:466px;width:2416px;height:2px;background:#e6e8ec"></div>
<div class="t" style="left:33px;top:489px;font-size:28px;line-height:28px;color:#154994;">yandex.kz</div>
<svg style="position:absolute;left:167px;top:501px" width="16" height="10" viewBox="0 0 16 10"><polygon points="0,0 16,0 8.0,10" fill="#154994"/></svg>
<div class="abs" style="left:348px;top:484px;width:69px;height:36px;border-radius:18px;background:#e5363a"></div>
<div class="t" style="left:361px;top:490px;font-size:24px;line-height:24px;color:#fff;">Lost</div>
<div class="t" style="left:468px;top:489px;font-size:28px;line-height:28px;color:#333333;">81</div>
<div class="t" style="right:1749px;top:489px;font-size:28px;line-height:28px;color:#154994;">7,872</div>
<div class="t" style="right:1520px;top:489px;font-size:28px;line-height:28px;color:#154994;">20,433</div>
<div class="t" style="right:1362px;top:489px;font-size:28px;line-height:28px;color:#333333;">3,046,802</div>
<div class="t" style="right:1207px;top:489px;font-size:28px;line-height:28px;color:#154994;">284,198</div>
<div class="abs" style="left:1374px;top:484px;width:79px;height:44px;box-sizing:border-box;border:2px solid #c9c9c9;border-radius:6px;background:#fff"></div>
<div class="t" style="left:1392px;top:493px;font-size:28px;line-height:28px;color:#333333;">1</div>
<svg style="position:absolute;left:1419px;top:502px" width="15" height="10" viewBox="0 0 15 10"><polygon points="0,0 15,0 7.5,10" fill="#333333"/></svg>
<div class="t" style="right:690px;top:489px;font-size:28px;line-height:28px;color:#c31515;">–1</div>
<div class="t" style="right:548px;top:489px;font-size:28px;line-height:28px;color:#333333;">0</div>
<div class="t" style="left:2090px;top:489px;font-size:28px;line-height:28px;color:#333333;">17 Jan 2022</div>
<div class="t" style="left:2285px;top:489px;font-size:28px;line-height:28px;color:#333333;">24 Jan 2025</div>
<div class="abs" style="left:32px;top:544px;width:2416px;height:2px;background:#e6e8ec"></div>
<div class="t" style="left:33px;top:567px;font-size:28px;line-height:28px;color:#154994;">pravda.com.ua</div>
<svg style="position:absolute;left:228px;top:579px" width="16" height="10" viewBox="0 0 16 10"><polygon points="0,0 16,0 8.0,10" fill="#154994"/></svg>
<div class="t" style="left:468px;top:567px;font-size:28px;line-height:28px;color:#333333;">79</div>
<div class="t" style="right:1749px;top:567px;font-size:28px;line-height:28px;color:#154994;">32,087</div>
<div class="t" style="right:1520px;top:567px;font-size:28px;line-height:28px;color:#154994;">37,698</div>
<div class="t" style="right:1362px;top:567px;font-size:28px;line-height:28px;color:#333333;">5,002,604</div>
<div class="t" style="right:1207px;top:567px;font-size:28px;line-height:28px;color:#154994;">414,209</div>
<div class="abs" style="left:1374px;top:562px;width:79px;height:44px;box-sizing:border-box;border:2px solid #c9c9c9;border-radius:6px;background:#fff"></div>
<div class="t" style="left:1392px;top:571px;font-size:28px;line-height:28px;color:#333333;">3</div>
<svg style="position:absolute;left:1419px;top:580px" width="15" height="10" viewBox="0 0 15 10"><polygon points="0,0 15,0 7.5,10" fill="#333333"/></svg>
<div class="t" style="right:843px;top:567px;font-size:28px;line-height:28px;color:#1b8a3a;">+2</div>
<div class="t" style="right:548px;top:567px;font-size:28px;line-height:28px;color:#333333;">0</div>
<div class="t" style="left:2090px;top:567px;font-size:28px;line-height:28px;color:#333333;">30 May 2019</div>
<div class="abs" style="left:32px;top:622px;width:2416px;height:2px;background:#e6e8ec"></div>
<div class="t" style="left:33px;top:645px;font-size:28px;line-height:28px;color:#154994;">work.ua</div>
<svg style="position:absolute;left:141px;top:657px" width="16" height="10" viewBox="0 0 16 10"><polygon points="0,0 16,0 8.0,10" fill="#154994"/></svg>
<div class="t" style="left:468px;top:645px;font-size:28px;line-height:28px;color:#333333;">78</div>
<div class="t" style="right:1749px;top:645px;font-size:28px;line-height:28px;color:#154994;">9,359</div>
<div class="t" style="right:1520px;top:645px;font-size:28px;line-height:28px;color:#154994;">1,496</div>
<div class="t" style="right:1362px;top:645px;font-size:28px;line-height:28px;color:#333333;">3,505,024</div>
<div class="t" style="right:1207px;top:645px;font-size:28px;line-height:28px;color:#154994;">236,709</div>
<div class="abs" style="left:1358px;top:640px;width:95px;height:44px;box-sizing:border-box;border:2px solid #c9c9c9;border-radius:6px;background:#fff"></div>
<div class="t" style="left:1376px;top:649px;font-size:28px;line-height:28px;color:#333333;">38</div>
<svg style="position:absolute;left:1419px;top:658px" width="15" height="10" viewBox="0 0 15 10"><polygon points="0,0 15,0 7.5,10" fill="#333333"/></svg>
<div class="t" style="right:843px;top:645px;font-size:28px;line-height:28px;color:#1b8a3a;">+32</div>
<div class="t" style="right:690px;top:645px;font-size:28px;line-height:28px;color:#c31515;">–27</div>
<div class="t" style="right:548px;top:645px;font-size:28px;line-height:28px;color:#333333;">0</div>
<div class="t" style="left:2090px;top:645px;font-size:28px;line-height:28px;color:#333333;">20 Jul 2016</div>
<div class="abs" style="left:32px;top:700px;width:2416px;height:2px;background:#e6e8ec"></div>
<div class="t" style="left:33px;top:723px;font-size:28px;line-height:28px;color:#154994;">liga.net</div>
<svg style="position:absolute;left:131px;top:735px" width="16" height="10" viewBox="0 0 16 10"><polygon points="0,0 16,0 8.0,10" fill="#154994"/></svg>
<div class="t" style="left:468px;top:723px;font-size:28px;line-height:28px;color:#333333;">78</div>
<div class="t" style="right:1749px;top:723px;font-size:28px;line-height:28px;color:#154994;">35,201</div>
<div class="t" style="right:1520px;top:723px;font-size:28px;line-height:28px;color:#154994;">4,114</div>
<div class="t" style="right:1362px;top:723px;font-size:28px;line-height:28px;color:#333333;">1,842,125</div>
<div class="t" style="right:1207px;top:723px;font-size:28px;line-height:28px;color:#154994;">283,306</div>
<div class="abs" style="left:1374px;top:718px;width:79px;height:44px;box-sizing:border-box;border:2px solid #c9c9c9;border-radius:6px;background:#fff"></div>
<div class="t" style="left:1392px;top:727px;font-size:28px;line-height:28px;color:#333333;">2</div>
<svg style="position:absolute;left:1419px;top:736px" width="15" height="10" viewBox="0 0 15 10"><polygon points="0,0 15,0 7.5,10" fill="#333333"/></svg>
<div class="t" style="right:548px;top:723px;font-size:28px;line-height:28px;color:#333333;">2</div>
<div class="abs" style="left:1931px;top:731px;width:21px;height:11px;background:#3a88d8"></div>
<div class="t" style="left:2090px;top:723px;font-size:28px;line-height:28px;color:#333333;">22 Dec 2021</div>
<div class="abs" style="left:32px;top:778px;width:2416px;height:2px;background:#e6e8ec"></div>
<div class="t" style="left:33px;top:801px;font-size:28px;line-height:28px;color:#154994;">interfax.com.ua</div>
<svg style="position:absolute;left:234px;top:813px" width="16" height="10" viewBox="0 0 16 10"><polygon points="0,0 16,0 8.0,10" fill="#154994"/></svg>
<div class="t" style="left:468px;top:801px;font-size:28px;line-height:28px;color:#333333;">77</div>
<div class="t" style="right:1749px;top:801px;font-size:28px;line-height:28px;color:#154994;">24,017</div>
<div class="t" style="right:1520px;top:801px;font-size:28px;line-height:28px;color:#154994;">8,603</div>
<div class="t" style="right:1362px;top:801px;font-size:28px;line-height:28px;color:#333333;">137,408</div>
<div class="t" style="right:1207px;top:801px;font-size:28px;line-height:28px;color:#154994;">104,527</div>
<div class="abs" style="left:1374px;top:796px;width:79px;height:44px;box-sizing:border-box;border:2px solid #c9c9c9;border-radius:6px;background:#fff"></div>
<div class="t" style="left:1392px;top:805px;font-size:28px;line-height:28px;color:#333333;">5</div>
<svg style="position:absolute;left:1419px;top:814px" width="15" height="10" viewBox="0 0 15 10"><polygon points="0,0 15,0 7.5,10" fill="#333333"/></svg>
<div class="t" style="right:548px;top:801px;font-size:28px;line-height:28px;color:#333333;">5</div>
<div class="abs" style="left:1931px;top:809px;width:49px;height:11px;background:#3a88d8"></div>
<div class="t" style="left:2090px;top:801px;font-size:28px;line-height:28px;color:#333333;">11 Feb 2023</div>
<div class="abs" style="left:32px;top:856px;width:2416px;height:2px;background:#e6e8ec"></div>
<div class="t" style="left:33px;top:879px;font-size:28px;line-height:28px;color:#154994;">rbc.ua</div>
<svg style="position:absolute;left:120px;top:891px" width="16" height="10" viewBox="0 0 16 10"><polygon points="0,0 16,0 8.0,10" fill="#154994"/></svg>
<div class="t" style="left:468px;top:879px;font-size:28px;line-height:28px;color:#333333;">76</div>
<div class="t" style="right:1749px;top:879px;font-size:28px;line-height:28px;color:#154994;">51,001</div>
<div class="t" style="right:1520px;top:879px;font-size:28px;line-height:28px;color:#154994;">13,527</div>
<div class="t" style="right:1362px;top:879px;font-size:28px;line-height:28px;color:#333333;">3,096,118</div>
<div class="t" style="right:1207px;top:879px;font-size:28px;line-height:28px;color:#154994;">844,911</div>
<div class="abs" style="left:1358px;top:874px;width:95px;height:44px;box-sizing:border-box;border:2px solid #c9c9c9;border-radius:6px;background:#fff"></div>
<div class="t" style="left:1376px;top:883px;font-size:28px;line-height:28px;color:#333333;">14</div>
<svg style="position:absolute;left:1419px;top:892px" width="15" height="10" viewBox="0 0 15 10"><polygon points="0,0 15,0 7.5,10" fill="#333333"/></svg>
<div class="t" style="right:843px;top:879px;font-size:28px;line-height:28px;color:#1b8a3a;">+10</div>
<div class="t" style="right:548px;top:879px;font-size:28px;line-height:28px;color:#333333;">0</div>
<div class="t" style="left:2090px;top:879px;font-size:28px;line-height:28px;color:#333333;">21 Feb 2020</div>
</div>
<div class="abs" style="left:388px;top:1456px;width:2448px;height:2px;background:#e6e8ec"></div>
<div class="abs" style="left:394px;top:1462px;width:2394px;height:24px;border-radius:9px;background:#c9c9c9"></div>
<div class="abs" style="left:2764px;top:1372px;width:80px;height:80px;border-radius:50%;background:#2d3b53"></div>
<div class="t" style="left:2764px;top:1372px;width:80px;height:80px;line-height:80px;text-align:center;font-size:48px;color:#fff">?</div>
<svg class="abs" style="left:2043px;top:361px" width="28" height="40" viewBox="0 0 28 40">
<path d="M3.2 3.2 V30.6 L9.4 24.9 L13.6 35.2 L19.1 32.9 L15 23 L23.4 23 Z" fill="#eddce8" stroke="#000" stroke-width="1.9" stroke-linejoin="miter"/></svg>
</body></html>
